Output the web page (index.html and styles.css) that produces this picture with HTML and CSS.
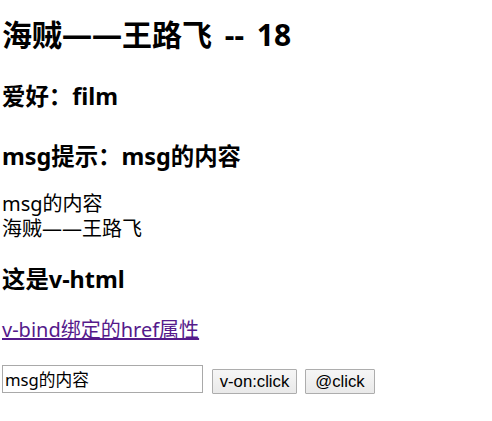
FILE: index.html
```html
<!DOCTYPE html>
<html lang="zh-CN">
<head>
<meta charset="utf-8">
<title>Vue demo</title>
<link rel="stylesheet" href="styles.css">
</head>
<body>
<div class="app">
  <h1 class="title">海贼——王路飞 -- 18</h1>
  <h3 class="sub sub-hobby">爱好：film</h3>
  <h3 class="sub sub-msg">msg提示：msg的内容</h3>
  <p class="text">msg的内容<br>海贼——王路飞</p>
  <h3 class="sub sub-html">这是v-html</h3>
  <p class="linkline"><a class="link" href="#">v-bind绑定的href属性</a></p>
  <div class="row">
    <input class="field" type="text" value="msg的内容">
    <button class="btn btn-on">v-on:click</button>
    <button class="btn btn-at">@click</button>
  </div>
</div>
</body>
</html>
```

FILE: styles.css
```css
html, body {
  background: #ffffff;
}
body {
  margin: 0 2px;
  color: #000000;
  font-family: "Noto Sans", "Noto Sans CJK SC", sans-serif;
}
.app {
  display: flex;
  flex-direction: column;
  align-items: flex-start;
}
.title {
  margin: 15px 0 0;
  font-size: 30px;
  line-height: 40px;
  font-weight: 700;
  word-spacing: 5px;
}
.sub {
  margin: 0;
  font-size: 23.4px;
  line-height: 30px;
  font-weight: 700;
}
.sub-hobby { margin-top: 26px; }
.sub-msg { margin-top: 30px; }
.text {
  margin: 20px 0 0;
  font-size: 20px;
  line-height: 25px;
}
.sub-html { margin-top: 23px; }
.linkline {
  margin: 23px 0 0;
  font-size: 20px;
  line-height: 25px;
}
.link {
  color: #551a8b;
  text-decoration: underline;
}
.row {
  margin-top: 23px;
  display: flex;
  align-items: flex-start;
}
.field {
  box-sizing: border-box;
  width: 201px;
  height: 28px;
  margin: 0;
  padding: 0 2px;
  border: 1px solid #a9a9a9;
  font-family: "Noto Sans", "Noto Sans CJK SC", sans-serif;
  font-size: 16.7px;
  color: #000000;
  background: #ffffff;
}
.btn {
  box-sizing: border-box;
  height: 25px;
  margin: 4px 0 0;
  padding: 0;
  border: 1px solid #adadad;
  border-radius: 1px;
  background: linear-gradient(#f6f6f6, #e9e9e9);
  font-family: "Liberation Sans", Arial, sans-serif;
  font-size: 16.7px;
  color: #000000;
}
.btn-on {
  width: 85px;
  margin-left: 9px;
}
.btn-at {
  width: 70px;
  margin-left: 8px;
}
```
